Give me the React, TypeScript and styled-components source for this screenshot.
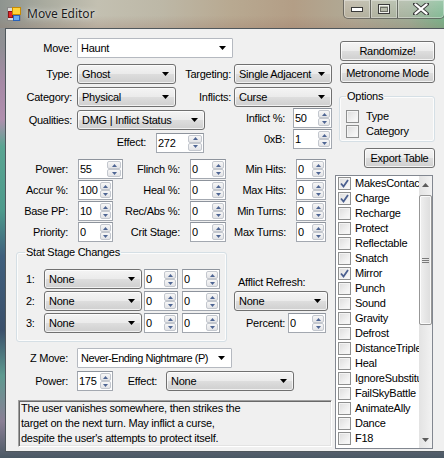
import styled, { createGlobalStyle } from "styled-components";

const GlobalStyle = createGlobalStyle`
  *, *::before, *::after { box-sizing: border-box; }
  html, body { margin: 0; padding: 0; overflow: hidden; }
  body {
    font-family: "Liberation Sans", Arial, sans-serif;
    font-size: 11px;
    letter-spacing: -0.25px;
    color: #000;
  }
`;

const Window = styled.div`
  width: 444px;
  height: 458px;
  display: flex;
  flex-direction: column;
  overflow: hidden;
  background: linear-gradient(
    to bottom,
    #8e948f 0%,
    #8f8f94 10%,
    #a68aa6 18%,
    #b08fae 26%,
    #5aa592 32%,
    #4d9a8c 46%,
    #3f5f7d 56%,
    #3a4f6a 72%,
    #5e9a90 82%,
    #8a7f95 92%,
    #4a5864 100%
  );
`;

const TitleBar = styled.div`
  height: 28px;
  flex: none;
  display: flex;
  align-items: flex-start;
  background:
    linear-gradient(to bottom, rgba(255, 255, 255, 0) 55%, rgba(150, 110, 95, 0.25) 100%),
    linear-gradient(
      to right,
      #8e948f 0%,
      #a9ab9f 10%,
      #c3c0b1 22%,
      #bdb8a7 36%,
      #b8a991 52%,
      #b39e86 66%,
      #b0aa96 80%,
      #9fae98 92%,
      #78b58c 100%
    );
`;

const TitleIcon = styled.div`
  width: 14px;
  height: 14px;
  margin: 7px 0 0 7px;
  flex: none;
  display: flex;
`;

const TitleText = styled.div`
  margin: 5px 0 0 6px;
  font-family: "Noto Sans", "Open Sans", sans-serif;
  font-size: 12px;
  line-height: 17px;
  letter-spacing: 0;
  color: #1c1c1c;
  text-shadow: 0 0 6px rgba(255, 255, 255, 0.8), 0 0 2px rgba(255, 255, 255, 0.6);
  flex: 1;
`;

const CaptionGroup = styled.div`
  display: flex;
  height: 19px;
  flex: none;
  margin-right: -1px;
`;

const CaptionButton = styled.div<{ $w: number; $edge?: "left" | "right" }>`
  width: ${(p) => p.$w}px;
  height: 19px;
  display: flex;
  align-items: center;
  justify-content: center;
  border: 1px solid rgba(40, 40, 40, 0.55);
  border-top: none;
  border-left-width: ${(p) => (p.$edge === "left" ? 1 : 0)}px;
  border-radius: ${(p) =>
    p.$edge === "left" ? "0 0 0 5px" : p.$edge === "right" ? "0 0 5px 0" : "0"};
  background: linear-gradient(to bottom, rgba(255, 255, 255, 0.28), rgba(255, 255, 255, 0.08));
  box-shadow: inset 0 0 0 1px rgba(255, 255, 255, 0.35);
`;

const Body = styled.div`
  flex: 1;
  display: flex;
  padding: 0 0 6px 5px;
  min-height: 0;
`;

const Client = styled.div`
  flex: 1;
  display: flex;
  background: #f0f0f0;
  border: 1px solid #4f575c;
  border-right: none;
  min-width: 0;
`;

const LeftPanel = styled.div`
  width: 329px;
  flex: none;
  display: flex;
  flex-direction: column;
  padding-top: 9px;
`;

const RightPanel = styled.div`
  flex: 1;
  display: flex;
  flex-direction: column;
  padding-top: 12px;
`;

const Row = styled.div<{ $top?: number; $h?: number; $left?: number }>`
  display: flex;
  align-items: center;
  height: ${(p) => p.$h ?? 20}px;
  margin-top: ${(p) => p.$top ?? 0}px;
  margin-left: ${(p) => p.$left ?? 0}px;
  flex: none;
`;

const Split = styled.div<{ $top?: number }>`
  display: flex;
  margin-top: ${(p) => p.$top ?? 0}px;
`;

const Column = styled.div<{ $w?: number; $top?: number; $left?: number }>`
  display: flex;
  flex-direction: column;
  width: ${(p) => (p.$w ? `${p.$w}px` : "auto")};
  margin-top: ${(p) => p.$top ?? 0}px;
  margin-left: ${(p) => p.$left ?? 0}px;
  flex: none;
`;

const Label = styled.span<{ $w: number; $pad?: number; $align?: "left" | "right" }>`
  width: ${(p) => p.$w}px;
  padding-right: ${(p) => p.$pad ?? 0}px;
  text-align: ${(p) => p.$align ?? "right"};
  white-space: nowrap;
  flex: none;
  line-height: 13px;
`;

const PlainLabel = styled.div<{ $top?: number; $left?: number }>`
  margin-top: ${(p) => p.$top ?? 0}px;
  margin-left: ${(p) => p.$left ?? 0}px;
  line-height: 13px;
  white-space: nowrap;
`;

const ComboBox = styled.div<{ $w: number; $edit?: boolean; $left?: number }>`
  width: ${(p) => p.$w}px;
  height: 20px;
  flex: none;
  margin-left: ${(p) => p.$left ?? 0}px;
  display: flex;
  align-items: center;
  padding: 0 6px 0 ${(p) => (p.$edit ? 3 : 4)}px;
  border: 1px solid ${(p) => (p.$edit ? "#b5b9c0" : "#707070")};
  border-radius: ${(p) => (p.$edit ? 1 : 3)}px;
  background: ${(p) =>
    p.$edit
      ? "#ffffff"
      : "linear-gradient(to bottom, #f4f4f4 0%, #ebebeb 48%, #dddddd 52%, #cfcfcf 100%)"};
  box-shadow: ${(p) => (p.$edit ? "none" : "inset 0 0 0 1px rgba(255,255,255,0.7)")};
`;

const ComboText = styled.span<{ $tight?: boolean }>`
  flex: 1;
  white-space: nowrap;
  overflow: hidden;
  line-height: 13px;
  letter-spacing: ${(p) => (p.$tight ? "-0.45px" : "inherit")};
`;

const Spin = styled.div<{ $w: number; $left?: number }>`
  width: ${(p) => p.$w}px;
  height: 20px;
  flex: none;
  margin-left: ${(p) => p.$left ?? 0}px;
  display: flex;
  align-items: stretch;
  background: #fff;
  border: 1px solid #a3a8b0;
  border-top-color: #8d939c;
  padding: 1px;
`;

const SpinValue = styled.span`
  flex: 1;
  min-width: 0;
  padding-left: 0;
  line-height: 16px;
  overflow: hidden;
  white-space: nowrap;
`;

const SpinButtons = styled.div<{ $w: number }>`
  width: ${(p) => p.$w}px;
  flex: none;
  display: flex;
  flex-direction: column;
`;

const SpinButton = styled.div`
  flex: 1;
  display: flex;
  align-items: center;
  justify-content: center;
  border: 1px solid #c3c7ce;
  border-radius: 2px;
  background: linear-gradient(to bottom, #f7f7f7, #e2e3e6);
`;

const Button = styled.div<{ $w: number; $left?: number; $top?: number }>`
  width: ${(p) => p.$w}px;
  height: 20px;
  flex: none;
  margin-left: ${(p) => p.$left ?? 0}px;
  margin-top: ${(p) => p.$top ?? 0}px;
  display: flex;
  align-items: center;
  justify-content: center;
  border: 1px solid #707070;
  border-radius: 3px;
  background: linear-gradient(to bottom, #f4f4f4 0%, #ebebeb 48%, #dddddd 52%, #cfcfcf 100%);
  box-shadow: inset 0 0 0 1px rgba(255, 255, 255, 0.75);
  line-height: 13px;
  white-space: nowrap;
`;

const Group = styled.fieldset<{
  $w: number;
  $left?: number;
  $top?: number;
  $padTop: number;
  $padLeft: number;
  $padBottom: number;
}>`
  width: ${(p) => p.$w}px;
  margin: ${(p) => p.$top ?? 0}px 0 0 ${(p) => p.$left ?? 0}px;
  padding: ${(p) => p.$padTop}px 0 ${(p) => p.$padBottom}px ${(p) => p.$padLeft}px;
  border: 1px solid #d5dfe5;
  border-radius: 3px;
  box-shadow: inset 0 0 0 1px rgba(255, 255, 255, 0.8);
  flex: none;
  display: flex;
  flex-direction: column;
  min-width: 0;
`;

const Legend = styled.legend<{ $left?: number }>`
  padding: 0 1px;
  margin-left: ${(p) => p.$left ?? 0}px;
  line-height: 13px;
  font-size: 11px;
`;

const NumberGrid = styled.div`
  display: grid;
  grid-template-columns: 72px 45px 67px 36px 70px 30px;
  grid-auto-rows: 20px;
  row-gap: 1px;
  margin-top: 7px;
  align-items: center;
`;

const GridLabel = styled.span`
  text-align: right;
  padding-right: 10px;
  white-space: nowrap;
  line-height: 13px;
`;

const GridCell = styled.div`
  display: flex;
  align-items: center;
`;

const Description = styled.div`
  width: 314px;
  height: 47px;
  margin: 9px 0 0 12px;
  padding: 0 2px;
  border: 1px solid;
  border-color: #a0a0a0 #ffffff #ffffff #a0a0a0;
  box-shadow: inset 1px 1px 0 #696969, inset -1px -1px 0 #e3e3e3;
  background: #f0f0f0;
  line-height: 15px;
  white-space: nowrap;
  overflow: hidden;
`;

const CheckRow = styled.div<{ $h?: number }>`
  display: flex;
  align-items: center;
  height: ${(p) => p.$h ?? 15}px;
  flex: none;
  white-space: nowrap;
`;

const CheckBoxBox = styled.div`
  width: 13px;
  height: 13px;
  flex: none;
  border: 1px solid #8e8f8f;
  background: linear-gradient(135deg, #dcdcdc 0%, #f0f0f0 60%, #fbfbfb 100%);
  box-shadow: inset 0 0 0 1px #f4f4f4;
  display: flex;
  align-items: center;
  justify-content: center;
`;

const CheckText = styled.span<{ $gap: number }>`
  margin-left: ${(p) => p.$gap}px;
  line-height: 13px;
`;

const ListBox = styled.div`
  width: 98px;
  height: 274px;
  margin-top: 7px;
  flex: none;
  display: flex;
  background: #fff;
  border: 1px solid #828790;
`;

const ListItems = styled.div`
  flex: 1;
  min-width: 0;
  overflow: hidden;
  display: flex;
  flex-direction: column;
  padding-left: 2px;
`;

const ScrollBar = styled.div`
  width: 13px;
  flex: none;
  display: flex;
  flex-direction: column;
  background: linear-gradient(to right, #e3e3e3, #f2f2f2);
`;

const ScrollArrow = styled.div`
  height: 17px;
  flex: none;
  display: flex;
  align-items: center;
  justify-content: center;
`;

const ScrollThumb = styled.div<{ $top: number; $h: number }>`
  height: ${(p) => p.$h}px;
  margin-top: ${(p) => p.$top}px;
  flex: none;
  border: 1px solid #979797;
  border-radius: 2px;
  background: linear-gradient(to right, #f0f0f0, #dcdcdc);
  box-shadow: inset 0 0 0 1px rgba(255, 255, 255, 0.8);
  display: flex;
  align-items: center;
  justify-content: center;
`;

const ScrollSpacer = styled.div`
  flex: 1;
`;

/* ---------- small drawn parts ---------- */

const DropArrow = () => (
  <svg width="7" height="4" viewBox="0 0 7 4">
    <polygon points="0,0 7,0 3.5,4" fill="#000" />
  </svg>
);

const SpinArrow = ({ up }: { up?: boolean }) => (
  <svg width="5" height="3" viewBox="0 0 5 3">
    <polygon points={up ? "0,3 5,3 2.5,0" : "0,0 5,0 2.5,3"} fill="#4e6593" />
  </svg>
);

const CheckMark = () => (
  <svg width="9" height="9" viewBox="0 0 9 9">
    <polyline points="1,4.5 3.5,7.5 8,1" fill="none" stroke="#4a5f8f" strokeWidth="1.8" />
  </svg>
);

const AppIcon = () => (
  <svg width="14" height="14" viewBox="0 0 14 14">
    <rect x="0.5" y="0.5" width="13" height="13" fill="#dadada" stroke="#8a8a8a" />
    <rect x="1.5" y="4.5" width="4" height="6" fill="#e1262a" stroke="#8c1414" />
    <rect x="5.5" y="0.5" width="8" height="7" fill="#ffd43a" stroke="#c88a00" />
    <rect x="6.5" y="8.5" width="6" height="5" fill="#6aaaf0" stroke="#2a62b8" />
  </svg>
);

const MinGlyph = () => (
  <svg width="12" height="6" viewBox="0 0 12 6">
    <rect x="0.5" y="1.5" width="11" height="4" fill="#fff" stroke="#3a3a3a" />
  </svg>
);

const MaxGlyph = () => (
  <svg width="12" height="10" viewBox="0 0 12 10">
    <rect x="0.5" y="0.5" width="11" height="9" fill="none" stroke="#3a3a3a" />
    <rect x="1.5" y="1.5" width="9" height="7" fill="none" stroke="#fff" strokeOpacity="0.8" />
    <rect x="2.5" y="3.5" width="7" height="4" fill="none" stroke="#3a3a3a" strokeOpacity="0.6" />
  </svg>
);

const CloseGlyph = () => (
  <svg width="16" height="12" viewBox="0 0 16 12">
    <path d="M2 1 L14 11 M14 1 L2 11" stroke="#3a3a3a" strokeWidth="4.2" strokeLinecap="round" />
    <path d="M2.4 1.4 L13.6 10.6 M13.6 1.4 L2.4 10.6" stroke="#fff" strokeWidth="2.2" strokeLinecap="round" />
  </svg>
);

const ScrollGrip = () => (
  <svg width="7" height="7" viewBox="0 0 7 7">
    <path d="M0 1.5 H7 M0 3.5 H7 M0 5.5 H7" stroke="#7a7a7a" strokeWidth="1" />
  </svg>
);

const ScrollTri = ({ up }: { up?: boolean }) => (
  <svg width="7" height="4" viewBox="0 0 7 4">
    <polygon points={up ? "0,4 7,4 3.5,0" : "0,0 7,0 3.5,4"} fill="#5c5c5c" />
  </svg>
);

/* ---------- controls ---------- */

const Combo = ({
  value,
  w,
  edit,
  left,
  tight,
}: {
  value: string;
  w: number;
  edit?: boolean;
  left?: number;
  tight?: boolean;
}) => (
  <ComboBox $w={w} $edit={edit} $left={left}>
    <ComboText $tight={tight}>{value}</ComboText>
    <DropArrow />
  </ComboBox>
);

const NumBox = ({ value, w, left, spin = 12 }: { value: string; w: number; left?: number; spin?: number }) => (
  <Spin $w={w} $left={left}>
    <SpinValue>{value}</SpinValue>
    <SpinButtons $w={spin}>
      <SpinButton>
        <SpinArrow up />
      </SpinButton>
      <SpinButton>
        <SpinArrow />
      </SpinButton>
    </SpinButtons>
  </Spin>
);

const Check = ({ label, checked, gap, h }: { label: string; checked?: boolean; gap: number; h?: number }) => (
  <CheckRow $h={h}>
    <CheckBoxBox>{checked && <CheckMark />}</CheckBoxBox>
    <CheckText $gap={gap}>{label}</CheckText>
  </CheckRow>
);

const numberRows = [
  ["Power:", "55", 45, "Flinch %:", "0", "Min Hits:", "0"],
  ["Accur %:", "100", 35, "Heal %:", "0", "Max Hits:", "0"],
  ["Base PP:", "10", 35, "Rec/Abs %:", "0", "Min Turns:", "0"],
  ["Priority:", "0", 35, "Crit Stage:", "0", "Max Turns:", "0"],
] as const;

const flags: [string, boolean][] = [
  ["MakesContact", true],
  ["Charge", true],
  ["Recharge", false],
  ["Protect", false],
  ["Reflectable", false],
  ["Snatch", false],
  ["Mirror", true],
  ["Punch", false],
  ["Sound", false],
  ["Gravity", false],
  ["Defrost", false],
  ["DistanceTriple", false],
  ["Heal", false],
  ["IgnoreSubstitute", false],
  ["FailSkyBattle", false],
  ["AnimateAlly", false],
  ["Dance", false],
  ["F18", false],
];

const App = () => {
  return (
    <Window>
      <GlobalStyle />
      <TitleBar>
        <TitleIcon>
          <AppIcon />
        </TitleIcon>
        <TitleText>Move Editor</TitleText>
        <CaptionGroup>
          <CaptionButton $w={28} $edge="left">
            <MinGlyph />
          </CaptionButton>
          <CaptionButton $w={27}>
            <MaxGlyph />
          </CaptionButton>
          <CaptionButton $w={47} $edge="right">
            <CloseGlyph />
          </CaptionButton>
        </CaptionGroup>
      </TitleBar>

      <Body>
        <Client>
          <LeftPanel>
            <Row>
              <Label $w={71} $pad={5}>Move:</Label>
              <Combo value="Haunt" w={156} edit />
            </Row>
            <Row $top={6}>
              <Label $w={71} $pad={5}>Type:</Label>
              <Combo value="Ghost" w={99} />
              <Label $w={58} $pad={3}>Targeting:</Label>
              <Combo value="Single Adjacent" w={98} />
            </Row>
            <Row $top={3}>
              <Label $w={71} $pad={5}>Category:</Label>
              <Combo value="Physical" w={99} />
              <Label $w={58} $pad={3}>Inflicts:</Label>
              <Combo value="Curse" w={98} />
            </Row>

            <Split $top={1}>
              <Column $w={234}>
                <Row $top={2}>
                  <Label $w={71} $pad={5}>Qualities:</Label>
                  <Combo value="DMG | Inflict Status" w={128} />
                </Row>
                <Row $top={3} $h={19}>
                  <Label $w={150} $pad={10}>Effect:</Label>
                  <NumBox value="272" w={48} spin={14} />
                </Row>
              </Column>
              <Column>
                <Row>
                  <Label $w={53} $pad={8}>Inflict %:</Label>
                  <NumBox value="50" w={39} />
                </Row>
                <Row $top={1}>
                  <Label $w={53} $pad={8}>0xB:</Label>
                  <NumBox value="1" w={39} />
                </Row>
              </Column>
            </Split>

            <NumberGrid>
              {numberRows.map(([l1, v1, w1, l2, v2, l3, v3]) => [
                <GridLabel key={l1}>{l1}</GridLabel>,
                <GridCell key={l1 + "v"}>
                  <NumBox value={v1} w={w1} spin={w1 > 40 ? 14 : 11} />
                </GridCell>,
                <GridLabel key={l2}>{l2}</GridLabel>,
                <GridCell key={l2 + "v"}>
                  <NumBox value={v2} w={36} />
                </GridCell>,
                <GridLabel key={l3}>{l3}</GridLabel>,
                <GridCell key={l3 + "v"}>
                  <NumBox value={v3} w={30} />
                </GridCell>,
              ])}
            </NumberGrid>

            <Split $top={4}>
              <Group $w={211} $left={10} $padTop={10} $padLeft={9} $padBottom={8}>
                <Legend $left={-1}>Stat Stage Changes</Legend>
                {["1:", "2:", "3:"].map((n, i) => (
                  <Row key={n} $top={i === 0 ? 0 : 2}>
                    <Label $w={18} $align="left">{n}</Label>
                    <Combo value="None" w={98} />
                    <NumBox value="0" w={34} left={2} />
                    <NumBox value="0" w={38} left={4} />
                  </Row>
                ))}
              </Group>
              <Column $w={94} $left={7}>
                <PlainLabel $top={30} $left={4}>Afflict Refresh:</PlainLabel>
                <Row $top={2}>
                  <Combo value="None" w={94} />
                </Row>
                <Row $top={2}>
                  <Label $w={54} $pad={3}>Percent:</Label>
                  <NumBox value="0" w={38} />
                </Row>
              </Column>
            </Split>

            <Row $top={6}>
              <Label $w={71} $pad={9}>Z Move:</Label>
              <Combo value="Never-Ending Nightmare (P)" w={155} edit tight />
            </Row>
            <Row $top={3}>
              <Label $w={71} $pad={9}>Power:</Label>
              <NumBox value="175" w={36} spin={11} />
              <Label $w={53} $pad={9}>Effect:</Label>
              <Combo value="None" w={128} />
            </Row>

            <Description>
              The user vanishes somewhere, then strikes the
              <br />
              target on the next turn. May inflict a curse,
              <br />
              despite the user's attempts to protect itself.
            </Description>
          </LeftPanel>

          <RightPanel>
            <Button $w={95} $left={5}>Randomize!</Button>
            <Button $w={95} $left={5} $top={2}>Metronome Mode</Button>
            <Group $w={96} $left={4} $top={7} $padTop={6} $padLeft={6} $padBottom={2}>
              <Legend>Options</Legend>
              <Check label="Type" gap={7} />
              <Check label="Category" gap={7} />
            </Group>
            <Button $w={71} $left={29} $top={6}>Export Table</Button>
            <ListBox>
              <ListItems>
                {flags.map(([name, on]) => (
                  <Check key={name} label={name} checked={on} gap={4} />
                ))}
              </ListItems>
              <ScrollBar>
                <ScrollArrow>
                  <ScrollTri up />
                </ScrollArrow>
                <ScrollThumb $top={2} $h={130}>
                  <ScrollGrip />
                </ScrollThumb>
                <ScrollSpacer />
                <ScrollArrow>
                  <ScrollTri />
                </ScrollArrow>
              </ScrollBar>
            </ListBox>
          </RightPanel>
        </Client>
      </Body>
    </Window>
  );
};

export default App;
